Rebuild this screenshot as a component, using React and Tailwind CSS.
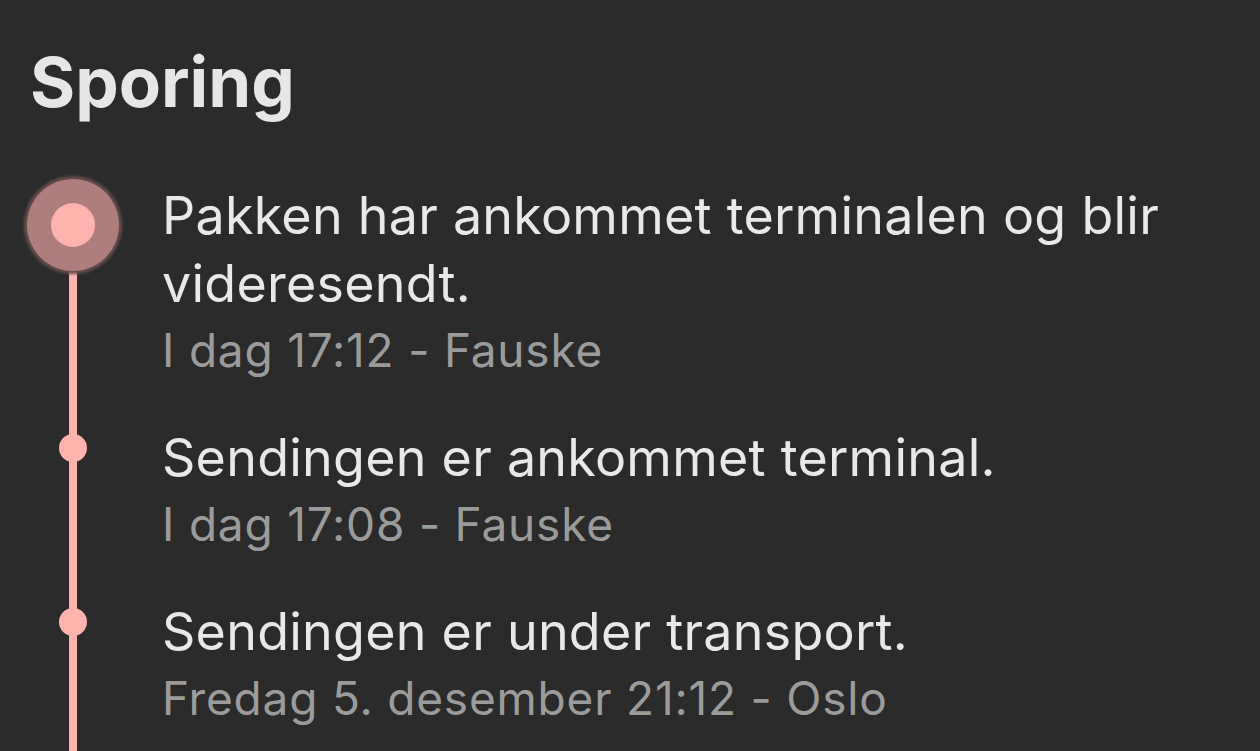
const EVENTS = [
  { title: 'Pakken har ankommet terminalen og blir videresendt.', meta: 'I dag 17:12 - Fauske', current: true },
  { title: 'Sendingen er ankommet terminal.', meta: 'I dag 17:08 - Fauske' },
  { title: 'Sendingen er under transport.', meta: 'Fredag 5. desember 21:12 - Oslo' },
]

function Marker({ current }) {
  if (current) {
    return (
      <div className="absolute left-[27px] top-[-3px] w-[92px] h-[92px] rounded-full bg-[#ad7e7b] shadow-[0_0_3px_3px_#654e4d] flex items-center justify-center">
        <div className="w-[44px] h-[44px] rounded-full bg-[#ffb3ae]" />
      </div>
    )
  }
  return <div className="absolute left-[59px] top-[10px] w-[28px] h-[28px] rounded-full bg-[#ffb3ae]" />
}

export default function App() {
  return (
    <div className="h-[751px] overflow-hidden bg-[#2b2b2b] text-[#e8e8e8]" style={{ fontFamily: 'Inter, "Noto Sans", sans-serif' }}>
      <h1 className="pl-[30px] pt-[46px] text-[69px] leading-[72px] font-bold text-[#e6e6e6]">Sporing</h1>

      <div className="relative mt-[64px] flex flex-col gap-[42px]">
        <div className="absolute left-[69px] top-[43px] bottom-[-200px] w-2 bg-[#ffb3ae]" />
        {EVENTS.map((e, i) => (
          <div key={i} className="relative flex">
            <div className="w-[162px] shrink-0 relative">
              <Marker current={e.current} />
            </div>
            <div className="pr-[60px]">
              <p className="text-[52px] leading-[68px] tracking-[0.25px]">{e.title}</p>
              <p className="text-[46px] leading-[64px] tracking-[0.8px] text-[#9b9b9b]">{e.meta}</p>
            </div>
          </div>
        ))}
      </div>
    </div>
  )
}
